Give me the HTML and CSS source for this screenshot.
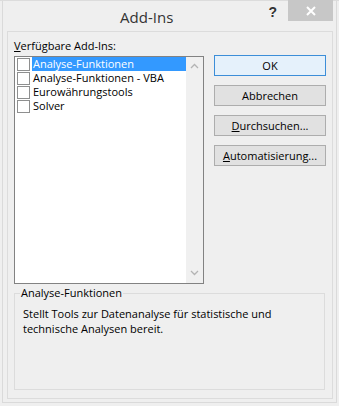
FILE: index.html
```html
<!DOCTYPE html>
<html>
  <head>
    <meta charset="UTF-8" />
    <title>Add-Ins</title>
    <link rel="stylesheet" href="styles.css">
  </head>
  <body>
    <div class="window">
      <div class="frame">
        <div class="titlebar">
          <span class="title">Add-Ins</span>
          <span class="help">?</span>
          <span class="close">
            <svg width="10" height="10" viewBox="0 0 10 10">
              <path d="M1 1 L9 9 M9 1 L1 9" stroke="#ffffff" stroke-width="2" />
            </svg>
          </span>
        </div>
        <div class="panel">
          <div class="label"><u>V</u>erfügbare Add-Ins:</div>
          <div class="main">
            <div class="listbox">
              <div class="items">
                <div class="item">
                  <span class="check"></span>
                  <span class="item-text selected">Analyse-Funktionen</span>
                </div>
                <div class="item">
                  <span class="check"></span>
                  <span class="item-text">Analyse-Funktionen - VBA</span>
                </div>
                <div class="item">
                  <span class="check"></span>
                  <span class="item-text">Eurowährungstools</span>
                </div>
                <div class="item">
                  <span class="check"></span>
                  <span class="item-text">Solver</span>
                </div>
              </div>
              <div class="scrollbar">
                <svg width="9" height="6" viewBox="0 0 9 6">
                  <path d="M1 5 L4.5 1.5 L8 5" fill="none" stroke="#b4b4b4" stroke-width="1.3" />
                </svg>
                <svg width="9" height="6" viewBox="0 0 9 6">
                  <path d="M1 1 L4.5 4.5 L8 1" fill="none" stroke="#b4b4b4" stroke-width="1.3" />
                </svg>
              </div>
            </div>
            <div class="buttons">
              <div class="btn default">OK</div>
              <div class="btn">Abbrechen</div>
              <div class="btn"><u>D</u>urchsuchen...</div>
              <div class="btn"><u>A</u>utomatisierung...</div>
            </div>
          </div>
          <div class="group">
            <span class="group-title">Analyse-Funktionen</span>
            <p class="group-text">Stellt Tools zur Datenanalyse für statistische und technische Analysen bereit.</p>
          </div>
        </div>
      </div>
    </div>
  </body>
</html>
```
FILE: styles.css
```css
body {
  margin: 0;
  font-family: "Open Sans", "Noto Sans", sans-serif;
  font-size: 11px;
  color: #000;
  background: #f0f0f0;
  overflow: hidden;
}

.window {
  width: 339px;
  height: 406px;
  box-sizing: border-box;
  padding: 0 2px 3px 2px;
  background: #efefef;
  border-top: 1px solid #dcdcdc;
}

.frame {
  height: 100%;
  box-sizing: border-box;
  border: 1px solid #dadada;
  border-top: none;
  display: flex;
  flex-direction: column;
  padding: 0 3px 3px 4px;
}

.titlebar {
  height: 30px;
  display: flex;
  align-items: flex-start;
}

.title {
  flex: 1;
  text-align: center;
  font-size: 15px;
  color: #333;
  padding: 6px 0 0 18px;
}

.help {
  font-family: "Liberation Sans", Arial, sans-serif;
  font-weight: bold;
  font-size: 14px;
  color: #333;
  margin: 3px 11px 0 0;
}

.close {
  width: 45px;
  height: 21px;
  margin-top: -1px;
  background: #c7c7c7;
  display: flex;
  align-items: center;
  justify-content: center;
}

.panel {
  flex: 1;
  border: 1px solid #dcdcdc;
  padding: 6px 6px 7px 6px;
  display: flex;
  flex-direction: column;
}

.label {
  height: 15px;
  line-height: 15px;
  margin-bottom: 3px;
}

.main {
  display: flex;
  gap: 10px;
}

.listbox {
  width: 190px;
  height: 228px;
  box-sizing: border-box;
  border: 1px solid #828282;
  background: #fff;
  display: flex;
}

.items {
  flex: 1;
  padding: 0 0 0 2px;
}

.item {
  height: 14px;
  display: flex;
  align-items: center;
}

.check {
  width: 11px;
  height: 11px;
  border: 1px solid #8e8f8f;
  background: #fff;
  margin-right: 2px;
}

.item-text {
  flex: 1;
  height: 14px;
  line-height: 14px;
  padding-left: 1px;
}

.item-text.selected {
  background: #3399ff;
  color: #fff;
}

.scrollbar {
  width: 17px;
  background: #f0f0f0;
  display: flex;
  flex-direction: column;
  justify-content: space-between;
  align-items: center;
  padding: 6px 0 7px 0;
}

.buttons {
  display: flex;
  flex-direction: column;
  gap: 9px;
  margin-top: -1px;
}

.btn {
  width: 112px;
  height: 21px;
  box-sizing: border-box;
  border: 1px solid #adadad;
  background: #e1e1e1;
  text-align: center;
  line-height: 19px;
}

.btn.default {
  border-color: #3c8ed8;
  background: #e5f1fb;
}

.group {
  position: relative;
  margin-top: 9px;
  width: 311px;
  height: 97px;
  box-sizing: border-box;
  border: 1px solid #dcdcdc;
  padding: 12px 8px 0 8px;
}

.group-title {
  position: absolute;
  top: -9px;
  left: 5px;
  padding: 0 1px;
  background: #efefef;
  line-height: 15px;
}

.group-text {
  margin: 0;
  line-height: 15px;
}
```
